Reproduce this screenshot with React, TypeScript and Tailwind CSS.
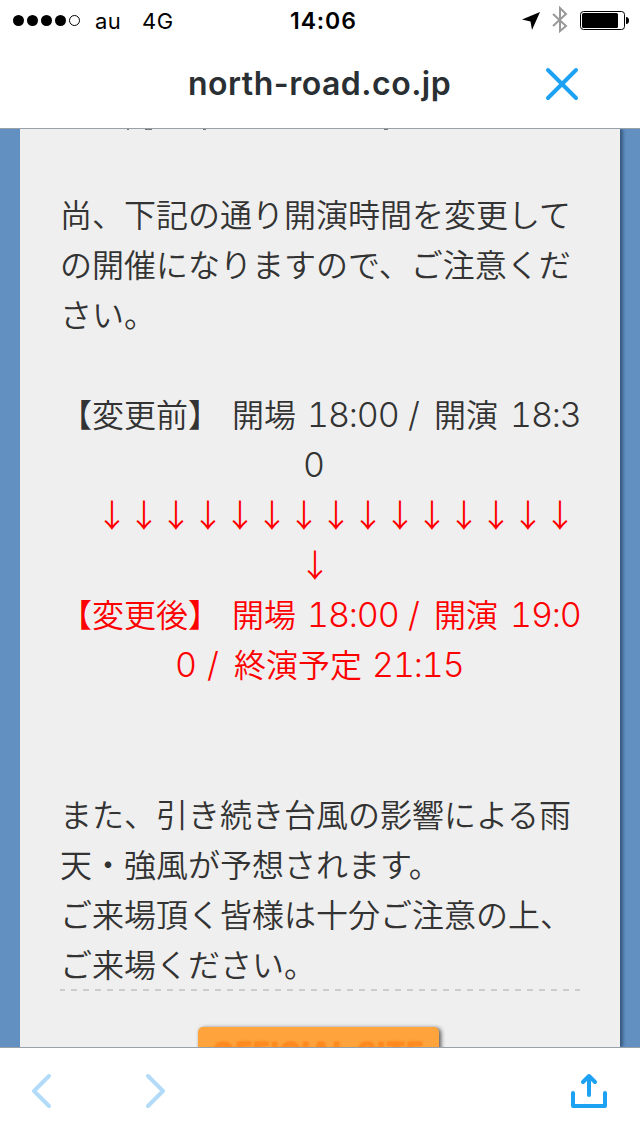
const before = ["尚、下記の通り開演時間を変更して", "の開催になりますので、ご注意くだ", "さい。"];
const after = [
  "また、引き続き台風の影響による雨",
  "天・強風が予想されます。",
  "ご来場頂く皆様は十分ご注意の上、",
  "ご来場ください。",
];

function Latin({ children, className = "" }: { children: string; className?: string }) {
  return (
    <span className={`block pt-[2px] font-['Inter'] text-[34px] font-[340] tracking-[-1.1px] whitespace-pre tabular-nums ${className}`}>
      {children}
    </span>
  );
}

function Schedule({ label, tail }: { label: string; tail: string }) {
  return (
    <div className="flex h-[50px] whitespace-pre">
      <span className="w-[172px]">{label}</span>
      <span className="w-[75px]">開場</span>
      <Latin className="w-[101px]">18:00</Latin>
      <Latin className="w-[26px]">/</Latin>
      <span className="w-[76px]">開演</span>
      <Latin className="w-[70px]">{tail}</Latin>
    </div>
  );
}

function StatusBar() {
  return (
    <div className="flex h-10 items-center text-[22px] leading-10 text-black">
      <div className="ml-[13px] flex w-[82px] gap-[3px]">
        {[0, 1, 2, 3].map((i) => (
          <i key={i} className="size-[11px] rounded-full bg-black" />
        ))}
        <i className="size-[11px] rounded-full border border-black" />
      </div>
      <span className="w-[47px] pt-px tracking-[0.5px]">au</span>
      <span className="w-[148px] pt-px tracking-[0.5px]">4G</span>
      <span className="w-[232px] pt-px text-[23px] font-semibold tracking-[0.9px]">14:06</span>
      <svg className="h-[28px] w-[112px]" viewBox="0 0 112 28">
        <path d="M0 13.500 18 6 10 24 8.500 15.500Z" fill="#000" />
        <path d="M31 8 44 20 38 25V2L44 8 31 20" fill="none" stroke="#999" strokeWidth="2" />
        <rect x="58.5" y="5.5" width="44" height="18" rx="3" fill="none" stroke="#000" />
        <rect x="60" y="7" width="36" height="15" rx="1.5" />
        <path d="M104 11q3 0 3 3.500t-3 3.500Z" />
      </svg>
    </div>
  );
}

export default function App() {
  return (
    <div className="flex h-[1136px] w-[640px] flex-col overflow-hidden bg-white font-['Inter',sans-serif]">
      <StatusBar />
      <header className="flex h-[88px] items-center text-[#292f33]">
        <h1 className="ml-[188px] w-[357px] text-[32px] font-semibold tracking-[0.5px]">north-road.co.jp</h1>
        <svg className="size-[34px]" viewBox="0 0 34 34" fill="none" stroke="#1da1f2" strokeWidth="4" strokeLinecap="round">
          <path d="M3 3 31 31M31 3 3 31" />
        </svg>
      </header>
      <main className="h-[920px] overflow-hidden border-y border-[#98a0aa] bg-[#6290c0]">
        <div className="ml-5 h-[918px] w-[600px] overflow-hidden bg-[#efefef] px-10 font-['Noto_Sans_CJK_JP',sans-serif] text-[32px] leading-[50px] font-[350] text-[#333] shadow-[3px_0_3px_#365a80]">
          {/* bottom edge of the line scrolled under the header */}
          <div className="flex h-[59px] text-[#777]">
            <i className="ml-[67px] h-px w-[2px] bg-current" />
            <i className="ml-[16px] h-px w-[7px] bg-current" />
            <i className="ml-[51px] h-px w-[3px] bg-current" />
            <i className="ml-[178px] h-px w-[4px] bg-current" />
          </div>
          {before.map((line) => (
            <p key={line} className="whitespace-nowrap">{line}</p>
          ))}
          <div className="mt-[50px]">
            <Schedule label="【変更前】" tail="18:3" />
            <div className="flex h-[50px] pl-[243px]">
              <Latin>0</Latin>
            </div>
          </div>
          <div className="text-[#f00]">
            <p className="pl-9 whitespace-nowrap">{"↓".repeat(15)}</p>
            <p className="pl-[239px]">↓</p>
            <Schedule label="【変更後】" tail="19:0" />
            <div className="flex h-[50px] pl-[115px]">
              <Latin className="w-[32px]">0</Latin>
              <Latin className="w-[27px]">/</Latin>
              <span className="w-[138px]">終演予定</span>
              <Latin>21:15</Latin>
            </div>
          </div>
          <div className="mt-[100px]">
            {after.map((line) => (
              <p key={line} className="whitespace-nowrap">{line}</p>
            ))}
          </div>
          <div className="mt-px h-[2px] bg-[repeating-linear-gradient(90deg,#ccc_0_5px,transparent_5px_11px,#ccc_11px_12px)]" />
          <div className="mt-[36px] ml-[138px] h-[60px] w-[241px] rounded-[5px] bg-[#ffa33c] pt-[9px] text-center font-['Inter'] text-[28px] leading-[34px] font-bold tracking-[1.2px] whitespace-nowrap text-[#ff8a20] shadow-[2px_1px_4px_#555] text-shadow-[0_0_3px_#ff7a10]">
            OFFICIAL SITE
          </div>
        </div>
      </main>
      <footer className="flex h-[88px] items-center justify-between pr-8 pb-[2px] pl-[31px]">
        <div className="flex gap-[93px]">
          {["M18 3 3 18 18 33", "M3 3 18 18 3 33"].map((d) => (
            <svg key={d} className="h-9 w-[21px]" viewBox="0 0 21 36" fill="none" stroke="#b1dbf8" strokeWidth="4" strokeLinecap="round" strokeLinejoin="round">
              <path d={d} />
            </svg>
          ))}
        </div>
        <svg className="h-[36px] w-[38px]" viewBox="0 0 38 36" fill="none" stroke="#1da1f2" strokeWidth="4" strokeLinecap="round" strokeLinejoin="round">
          <path d="M3 20V33H35V20M19 22V3M13 9 19 3 25 9" />
        </svg>
      </footer>
    </div>
  );
}
